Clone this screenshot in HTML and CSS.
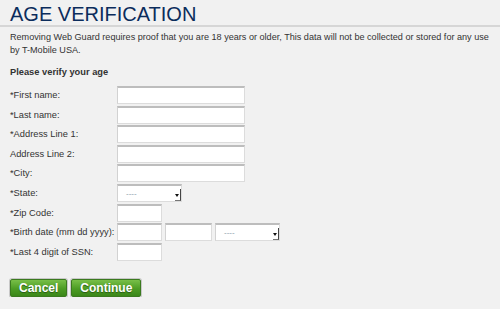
FILE: index.html
```html
<!DOCTYPE html>
<html lang="en">
<head>
    <meta charset="UTF-8">
    <meta name="viewport" content="width=device-width, initial-scale=1.0">
    <title>Age Verification</title>
    <link rel="stylesheet" href="styles.css">
</head>
<body>
    <h1>AGE VERIFICATION</h1>
    <p class="intro">
        Removing Web Guard requires proof that you are 18 years or older, This data will not be collected or stored for any use by T-Mobile USA.
    </p>

    <h2>Please verify your age</h2>

    <form class="verify">
        <label>*First name:</label>
        <div class="field"><input type="text" class="wide"></div>

        <label>*Last name:</label>
        <div class="field"><input type="text" class="wide"></div>

        <label>*Address Line 1:</label>
        <div class="field"><input type="text" class="wide"></div>

        <label>Address Line 2:</label>
        <div class="field"><input type="text" class="wide"></div>

        <label>*City:</label>
        <div class="field"><input type="text" class="wide"></div>

        <label>*State:</label>
        <div class="field">
            <div class="select"><span class="val">----</span><span class="arrow"></span></div>
        </div>

        <label>*Zip Code:</label>
        <div class="field"><input type="text" class="short"></div>

        <label>*Birth date (mm dd yyyy):</label>
        <div class="field">
            <input type="text" class="short">
            <input type="text" class="mid">
            <div class="select"><span class="val">----</span><span class="arrow"></span></div>
        </div>

        <label>*Last 4 digit of SSN:</label>
        <div class="field"><input type="text" class="short"></div>
    </form>

    <div class="buttons">
        <button type="button" class="btn">Cancel</button>
        <button type="button" class="btn">Continue</button>
    </div>
</body>
</html>
```

FILE: styles.css
```css
body {
    background-color: #f1f1f1;
    color: #333333;
    font-family: "Liberation Sans", Arial, sans-serif;
    font-size: 9.3px;
    margin: 0;
    padding: 0;
}

h1 {
    font-size: 20px;
    font-weight: normal;
    color: #0b2c5c;
    line-height: 21px;
    margin: 4px 0 0 0;
    padding: 0 10px 0 10px;
    border-bottom: 2px solid #d6d6d6;
}

.intro {
    font-size: 9.1px;
    margin: 4px 0 0 0;
    padding: 0 4px 0 10px;
    line-height: 12.5px;
}

h2 {
    font-size: 9.3px;
    font-weight: bold;
    margin: 10px 0 0 10px;
    line-height: 12px;
}

.verify {
    display: grid;
    grid-template-columns: 107px auto;
    grid-auto-rows: 18px;
    row-gap: 1.6px;
    margin: 8px 0 0 10px;
}

label {
    display: flex;
    align-items: center;
    white-space: nowrap;
}

.field {
    display: flex;
    gap: 3px;
}

input {
    box-sizing: border-box;
    height: 18px;
    margin: 0;
    padding: 0 2px;
    background-color: #ffffff;
    border: 1px solid #dcdcdc;
    border-top: 2px solid #bdbdbd;
    border-left-color: #d2d2d2;
}

.wide {
    width: 128px;
}

.short {
    width: 45px;
}

.mid {
    width: 47px;
}

.select {
    box-sizing: border-box;
    width: 65px;
    height: 18px;
    display: flex;
    align-items: stretch;
    justify-content: space-between;
    background-color: #ffffff;
    border: 1px solid #dcdcdc;
    border-top: 2px solid #bdbdbd;
    border-left-color: #d2d2d2;
}

.val {
    color: #8a9aaa;
    font-size: 8px;
    padding-left: 8px;
    display: flex;
    align-items: center;
}

.arrow {
    width: 5px;
    margin: 3px 0 0 0;
    border-right: 1px solid #444444;
    border-bottom: 1px solid #777777;
    position: relative;
}

.arrow::after {
    content: "";
    position: absolute;
    left: 0;
    top: 5px;
    border-left: 2px solid transparent;
    border-right: 2px solid transparent;
    border-top: 3px solid #111111;
}

.buttons {
    display: flex;
    gap: 4px;
    margin: 18px 0 0 10px;
}

.btn {
    height: 18px;
    padding: 0 8px;
    font-family: "Liberation Sans", Arial, sans-serif;
    font-size: 12px;
    font-weight: bold;
    color: #ffffff;
    text-shadow: 0 1px 1px #2a5a14;
    background: linear-gradient(#78bf48, #4c9c24 55%, #3b8719);
    border: 1px solid #3b7a1f;
    border-radius: 2px;
    box-shadow: 0 0 0 1px #c8c8c8;
    line-height: 16px;
    cursor: pointer;
}
```
